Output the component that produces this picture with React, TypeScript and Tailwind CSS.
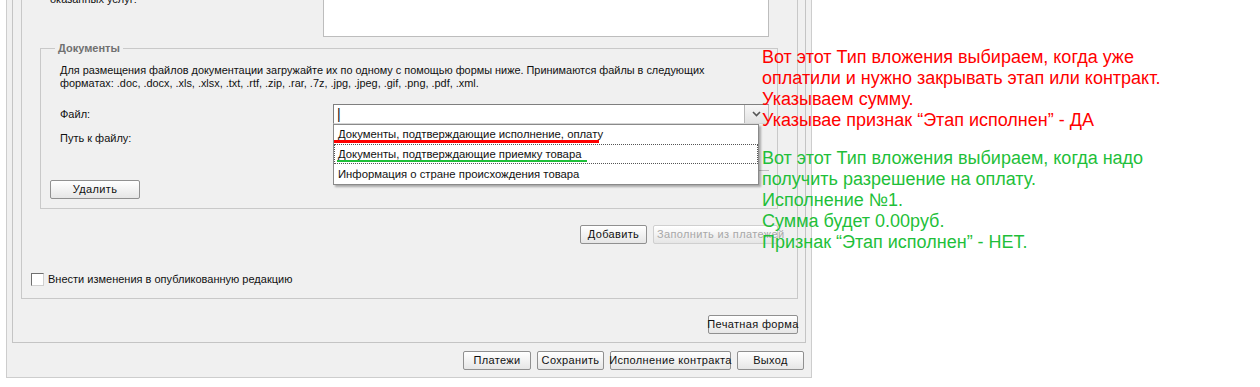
import React from 'react'

function Btn({ label, w, disabled }: { label: string; w: string; disabled?: boolean }) {
  return (
    <div
      className={`${w} h-[19px] flex items-center justify-center rounded-[2px] border bg-gradient-to-b from-white to-[#e6e6e6] font-['Liberation_Sans',Arial,sans-serif] text-[11px] tracking-[0.35px] whitespace-nowrap ${
        disabled ? 'border-[#cfcfcf] text-[#a8a8a8] justify-start pl-[3px] overflow-visible' : 'border-[#909090] text-[#111]'
      }`}
    >
      {label}
    </div>
  )
}

export default function App() {
  return (
    <div className="relative w-[1260px] h-[387px] overflow-hidden bg-white font-['Liberation_Sans',Arial,sans-serif] text-[11px] text-[#111]">
      {/* window */}
      <div className="ml-[6px] w-[806px] h-[378px] border-x border-b border-[#cdcdcd] bg-[#f0f0f0] flex flex-col">
        {/* inner panel */}
        <div className="mx-[5px] h-[343px] border-x border-b border-[#c4c4c4] flex flex-col">
          {/* outer fieldset */}
          <div className="ml-[8px] mr-[7px] h-[299px] border-x border-b border-[#c8c8c8] pl-[18px] pr-[19px] flex flex-col">
            <div className="h-[37px] flex">
              <div className="w-[283px] pl-[10px] -mt-[7px] leading-[13px]">оказанных услуг:</div>
              <div className="w-[446px] h-[37px] bg-white border-x border-b border-[#bdbdbd]" />
            </div>

            {/* Документы */}
            <div className="relative mt-[11px] h-[161px] border border-[#c9c9c9] pl-[9px] flex flex-col">
              <span className="absolute -top-[8px] left-[14px] px-[3px] bg-[#f0f0f0] font-bold text-[#707070] text-[11px] leading-[14px]">
                Документы
              </span>
              <div className="pl-[10px] pt-[15px] leading-[13px] text-[10.9px]">
                <div>Для размещения файлов документации загружайте их по одному с помощью формы ниже. Принимаются файлы в следующих</div>
                <div>форматах: .doc, .docx, .xls, .xlsx, .txt, .rtf, .zip, .rar, .7z, .jpg, .jpeg, .gif, .png, .pdf, .xml.</div>
              </div>
              <div className="mt-[14px] flex items-center h-[20px]">
                <div className="w-[283px] pl-[10px]">Файл:</div>
                <div className="relative w-[436px] h-[20px] bg-white border border-[#7f7f7f] border-r-[#bdbdbd] border-b-[#d6d6d6] flex">
                  <div className="flex-1 flex items-center pl-[3px] text-[14px] leading-none">|</div>
                  <div className="w-[24px] h-full border-l border-[#b8b8b8] bg-gradient-to-b from-[#f7f7f7] to-[#e2e2e2] flex items-center justify-center">
                    <svg width="9" height="6" viewBox="0 0 9 6">
                      <path d="M1 1 L4.5 4.5 L8 1" fill="none" stroke="#555" strokeWidth="1.6" />
                    </svg>
                  </div>
                  {/* dropdown list */}
                  <div className="absolute left-[-1px] top-[19px] w-[426px] bg-white border border-[#8a8a8a] shadow-[2px_2px_2px_rgba(0,0,0,0.3)] text-[11.3px] z-10">
                    <div className="relative h-[19px] pl-[4px] flex items-center">
                      Документы, подтверждающие исполнение, оплату
                      <div className="absolute left-0 top-[15px] w-[265px] h-[3px] bg-[#ff0000]" />
                    </div>
                    <div className="relative h-[20px] pl-[3px] flex items-center border border-dotted border-[#555]">
                      Документы, подтверждающие приемку товара
                      <div className="absolute left-[2px] top-[15px] w-[250px] h-[2px] bg-[#1fbf3a]" />
                    </div>
                    <div className="h-[20px] pl-[4px] flex items-center">Информация о стране происхождения товара</div>
                  </div>
                </div>
              </div>
              <div className="mt-[6px] flex h-[41px]">
                <div className="w-[283px] pl-[10px] pt-[2px] leading-[13px]">Путь к файлу:</div>
                <div className="w-[436px] border-b border-[#bdbdbd]" />
              </div>
              <div className="mt-[9px]">
                <Btn label="Удалить" w="w-[90px]" />
              </div>
            </div>

            <div className="mt-[16px] flex justify-end gap-[6px]">
              <Btn label="Добавить" w="w-[67px]" />
              <Btn label="Заполнить из платежей" w="w-[125px]" disabled />
            </div>

            <div className="mt-[29px] -ml-[9px] flex items-center gap-[4px] h-[13px]">
              <div className="w-[13px] h-[13px] bg-white border border-[#6f6f6f] border-r-[#d0d0d0] border-b-[#d0d0d0]" />
              <span className="text-[11px]">Внести изменения в опубликованную редакцию</span>
            </div>
          </div>

          <div className="mt-[16px] mr-[7px] flex justify-end">
            <Btn label="Печатная форма" w="w-[90px]" />
          </div>
        </div>

        <div className="mt-[8px] mr-[7px] flex justify-end gap-[6px]">
          <Btn label="Платежи" w="w-[68px]" />
          <Btn label="Сохранить" w="w-[67px]" />
          <Btn label="Исполнение контракта" w="w-[121px]" />
          <Btn label="Выход" w="w-[67px]" />
        </div>
      </div>

      {/* annotations */}
      <div className="absolute left-[762px] top-[47px] text-[18px] leading-[21px] font-['Liberation_Sans',Arial,sans-serif]">
        <div className="text-[#ff0000]">
          <div>Вот этот Тип вложения выбираем, когда уже</div>
          <div>оплатили и нужно закрывать этап или контракт.</div>
          <div>Указываем сумму.</div>
          <div>Указывае признак “Этап исполнен” - ДА</div>
        </div>
        <div className="mt-[17px] text-[#1fbf3a]">
          <div>Вот этот Тип вложения выбираем, когда надо</div>
          <div>получить разрешение на оплату.</div>
          <div>Исполнение №1.</div>
          <div>Сумма будет 0.00руб.</div>
          <div>Признак “Этап исполнен” - НЕТ.</div>
        </div>
      </div>
    </div>
  )
}
